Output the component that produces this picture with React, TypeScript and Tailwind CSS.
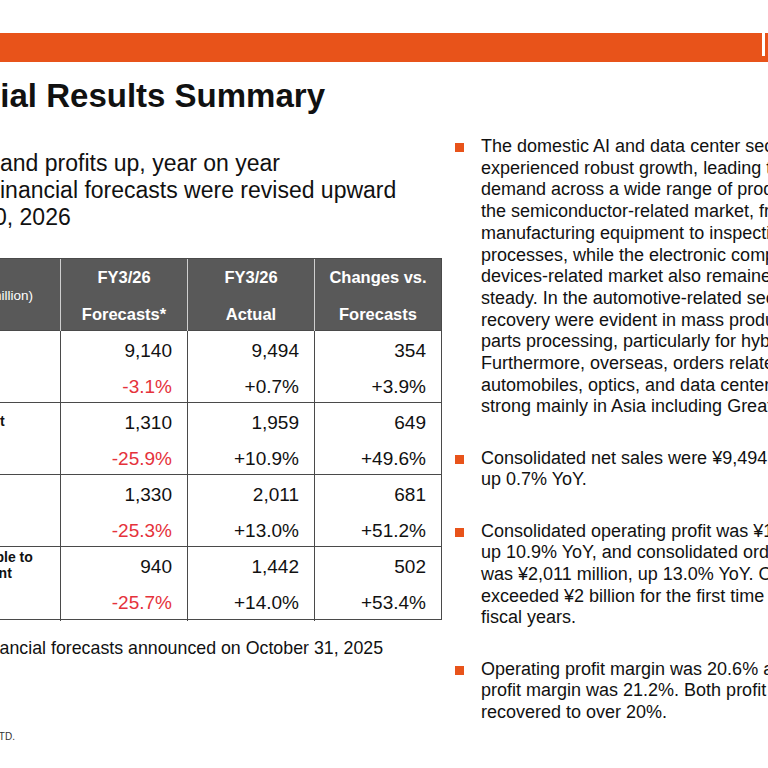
import React from "react";

const rows = [
  { label: ["Net sales"], v: [["9,140", "-3.1%"], ["9,494", "+0.7%"], ["354", "+3.9%"]] },
  { label: ["Operating profit"], v: [["1,310", "-25.9%"], ["1,959", "+10.9%"], ["649", "+49.6%"]] },
  { label: ["Ordinary profit"], v: [["1,330", "-25.3%"], ["2,011", "+13.0%"], ["681", "+51.2%"]] },
  { label: ["Profit attributable to", "owners of parent"], v: [["940", "-25.7%"], ["1,442", "+14.0%"], ["502", "+53.4%"]] },
];

const paragraphs = [
  [
    "The domestic AI and data center sector",
    "experienced robust growth, leading to strong",
    "demand across a wide range of products in",
    "the semiconductor-related market, from",
    "manufacturing equipment to inspection",
    "processes, while the electronic components and",
    "devices-related market also remained",
    "steady. In the automotive-related sector, signs of",
    "recovery were evident in mass production",
    "parts processing, particularly for hybrid vehicles.",
    "Furthermore, overseas, orders related to",
    "automobiles, optics, and data centers were",
    "strong mainly in Asia including Greater China.",
  ],
  ["Consolidated net sales were ¥9,494 million,", "up 0.7% YoY."],
  [
    "Consolidated operating profit was ¥1,959 million,",
    "up 10.9% YoY, and consolidated ordinary profit",
    "was ¥2,011 million, up 13.0% YoY. Ordinary profit",
    "exceeded ¥2 billion for the first time in three",
    "fiscal years.",
  ],
  [
    "Operating profit margin was 20.6% and ordinary",
    "profit margin was 21.2%. Both profit margins",
    "recovered to over 20%.",
  ],
];

export default function App() {
  return (
    <div className="w-[768px] h-[768px] overflow-hidden bg-white text-[#111] font-['Liberation_Sans',Arial,sans-serif]">
      <div className="h-[33px]" />
      <div className="h-[29px] bg-[#e8531a] flex justify-end pr-[3px]">
        <div className="w-[3px] h-[23px] bg-white" />
      </div>
      <div className="flex">
        {/* Left column */}
        <div className="-ml-[110px] w-[552px] shrink-0 flex flex-col">
          <div className="mt-[17px] pl-[4px] text-[33px] font-bold leading-none whitespace-nowrap">
            Financial Results Summary
          </div>
          <div className="mt-[37.5px] pl-[110px] text-[23px] leading-[27px] whitespace-nowrap">
            <div>and profits up, year on year</div>
            <div>inancial forecasts were revised upward</div>
            <div className="-ml-[6px]">0, 2026</div>
          </div>
          <div className="mt-[27.5px] w-[552px] border-[1.5px] border-[#4a4a4a]">
            <div className="grid grid-cols-[169px_127px_127px_127px] h-[72px] bg-[#595959] text-white border-b-[1.5px] border-[#4a4a4a]">
              <div className="flex items-center pl-[52px] text-[13.5px] whitespace-nowrap">(Unit: ¥ million)</div>
              {[["FY3/26", "Forecasts*"], ["FY3/26", "Actual"], ["Changes vs.", "Forecasts"]].map((h, i) => (
                <div key={i} className="flex flex-col items-center justify-center border-l-[1.5px] border-[#cfcfcf] text-[16.5px] font-bold leading-[37px] whitespace-nowrap">
                  <div>{h[0]}</div>
                  <div>{h[1]}</div>
                </div>
              ))}
            </div>
            {rows.map((r, ri) => (
              <div
                key={ri}
                className={`grid grid-cols-[169px_127px_127px_127px] h-[72px] ${ri < rows.length - 1 ? "border-b-[1.5px] border-[#4a4a4a]" : ""}`}
              >
                <div className="pl-[8px]">
                  <div className="h-[36px] flex flex-col justify-center text-[14px] font-bold leading-[16px] whitespace-nowrap">
                    {r.label.map((l, li) => (
                      <div key={li}>{l}</div>
                    ))}
                  </div>
                </div>
                {r.v.map((c, ci) => (
                  <div key={ci} className="border-l-[1.5px] border-[#4a4a4a] pt-[2px] pr-[15px] text-right text-[19px] leading-[36px]">
                    <div>{c[0]}</div>
                    <div className={ci === 0 ? "text-[#e5323b]" : ""}>{c[1]}</div>
                  </div>
                ))}
              </div>
            ))}
          </div>
          <div className="mt-[18px] pl-[73px] text-[17.8px] leading-[20.7px] whitespace-nowrap">
            * Financial forecasts announced on October 31, 2025
          </div>
          <div className="mt-[72px] pl-[104px] text-[10px] leading-[11px] text-[#333] whitespace-nowrap">LTD.</div>
        </div>
        {/* Right column */}
        <div className="pt-[74px] pl-[13px] flex flex-col gap-[29.5px]">
          {paragraphs.map((p, pi) => (
            <div key={pi} className="flex">
              <div className="w-[10px] shrink-0 pt-[7px]">
                <div className="w-[9px] h-[9px] bg-[#e8531a]" />
              </div>
              <div className="ml-[16px] text-[18px] leading-[21.7px] whitespace-nowrap">
                {p.map((line, li) => (
                  <div key={li}>{line}</div>
                ))}
              </div>
            </div>
          ))}
        </div>
      </div>
    </div>
  );
}
